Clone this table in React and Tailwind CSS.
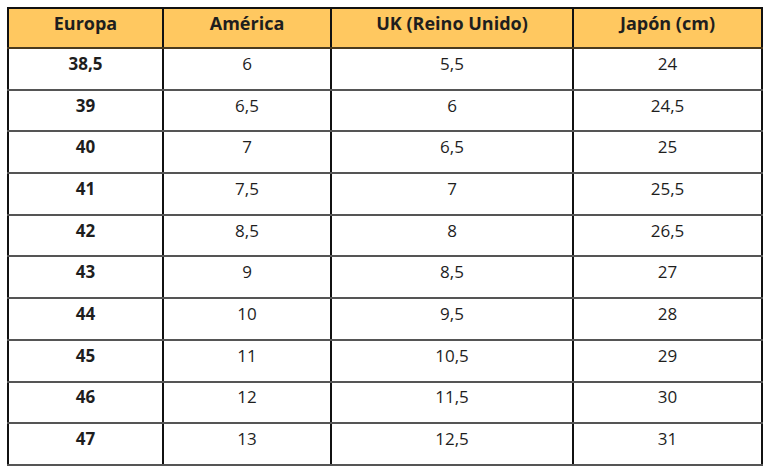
const headers = ["Europa", "América", "UK (Reino Unido)", "Japón (cm)"];

const rows = [
  ["38,5", "6", "5,5", "24"],
  ["39", "6,5", "6", "24,5"],
  ["40", "7", "6,5", "25"],
  ["41", "7,5", "7", "25,5"],
  ["42", "8,5", "8", "26,5"],
  ["43", "9", "8,5", "27"],
  ["44", "10", "9,5", "28"],
  ["45", "11", "10,5", "29"],
  ["46", "12", "11,5", "30"],
  ["47", "13", "12,5", "31"],
];

const widths = ["w-[155px]", "w-[168px]", "w-[242px]", "w-[189px]"];

export default function App() {
  return (
    <div className="min-h-screen bg-white pt-[7px] pl-[7px] font-['Open_Sans',sans-serif] text-[#1e1e1e]">
      <table className="table-fixed border-collapse border-2 border-[#111]">
        <thead>
          <tr className="h-[40px] bg-[#ffc860]">
            {headers.map((h, i) => (
              <th
                key={h}
                className={`${widths[i]} border-r-2 border-b-2 border-r-[#111] border-b-[#4a3a1e] pb-[10px] text-center align-middle text-[18px] font-bold leading-[20px]`}
              >
                {h}
              </th>
            ))}
          </tr>
        </thead>
        <tbody>
          {rows.map((r, ri) => (
            <tr key={ri} className="h-[41.7px]">
              {r.map((c, ci) => (
                <td
                  key={ci}
                  className={`border-r-2 border-b-2 border-r-[#111] border-b-[#555] pb-[10px] text-center align-middle text-[17px] leading-[20px] ${
                    ci === 0 ? "font-bold" : "font-normal"
                  }`}
                >
                  {c}
                </td>
              ))}
            </tr>
          ))}
        </tbody>
      </table>
    </div>
  );
}
